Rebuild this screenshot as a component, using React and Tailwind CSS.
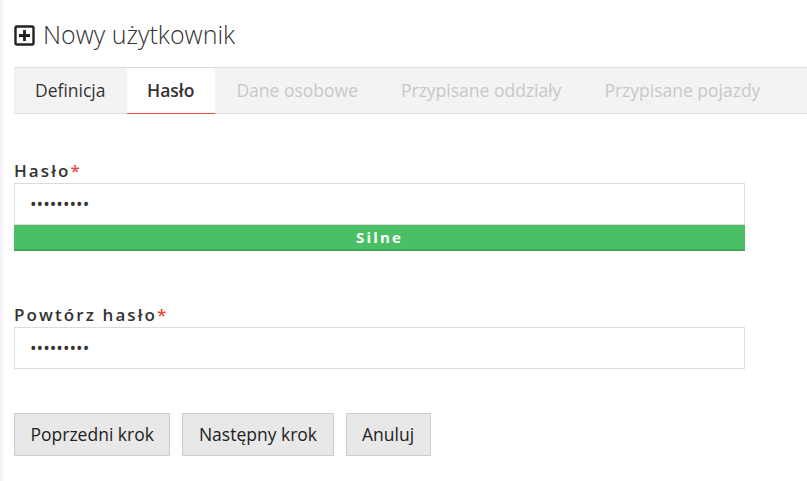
import { useState } from 'react';

const TABS = [
  { label: 'Definicja', state: 'done' },
  { label: 'Hasło', state: 'active' },
  { label: 'Dane osobowe', state: 'disabled' },
  { label: 'Przypisane oddziały', state: 'disabled' },
  { label: 'Przypisane pojazdy', state: 'disabled' },
];

function PlusSquare() {
  return (
    <svg width="21" height="21" viewBox="0 0 21 21" className="shrink-0">
      <rect x="1.5" y="1.5" width="18" height="18" rx="1.5" fill="none" stroke="#222" strokeWidth="2.4" />
      <path d="M10.5 5v11M5 10.5h11" stroke="#222" strokeWidth="2.8" />
    </svg>
  );
}

function Field({ label, value, children }) {
  return (
    <div>
      <label className="block text-[17px] font-semibold tracking-[2.1px] text-[#333] leading-[22px] mb-[1px]">
        {label}
        <span className="text-[#e8483b]">*</span>
      </label>
      <input
        type="password"
        readOnly
        value={value}
        className="block w-[731px] h-[42px] border border-[#dcdcdc] bg-white px-[15px] text-[17.5px] text-[#333] outline-none"
      />
      {children}
    </div>
  );
}

export default function App() {
  const [pass] = useState('123456789');

  return (
    <div className="min-h-screen bg-white font-['Open_Sans',sans-serif] text-[#333] flex">
      <div className="w-[3px] bg-[#f4f4f4] shrink-0" />
      <div className="flex-1 pl-[11px]">
        {/* Header */}
        <h1 className="flex items-center gap-[8px] h-[67px] pt-[3px] text-[25px] font-light text-[#333]">
          <PlusSquare />
          <span>Nowy użytkownik</span>
        </h1>

        {/* Tabs */}
        <div className="flex h-[47px] bg-[#f3f3f3] border-y border-[#dedede]">
          {TABS.map((t) => (
            <div
              key={t.label}
              className={
                t.state === 'active'
                  ? 'px-[20.5px] flex items-center bg-white text-[17.5px] font-semibold text-[#333] border-b border-[#e8483b] -mb-px'
                  : t.state === 'done'
                  ? 'px-[21px] flex items-center text-[17.5px] text-[#333]'
                  : 'px-[21.5px] flex items-center text-[17.5px] text-[#c8c8c8]'
              }
            >
              {t.label}
            </div>
          ))}
        </div>

        {/* Form */}
        <div className="pt-[46px]">
          <Field label="Hasło" value={pass}>
            <div className="w-[731px] h-[26px] bg-[#4abf65] border-b-2 border-[#3da957] flex items-center justify-center text-white text-[15px] font-bold tracking-[2.2px]">
              Silne
            </div>
          </Field>
        </div>

        <div className="pt-[53px]">
          <Field label="Powtórz hasło" value={pass} />
        </div>

        <div className="flex gap-[12px] pt-[44px]">
          {['Poprzedni krok', 'Następny krok', 'Anuluj'].map((b) => (
            <button
              key={b}
              className="h-[43px] px-[15.5px] bg-[#e8e8e8] border border-[#cdcdcd] text-[17.5px] text-[#222]"
            >
              {b}
            </button>
          ))}
        </div>
      </div>
    </div>
  );
}
